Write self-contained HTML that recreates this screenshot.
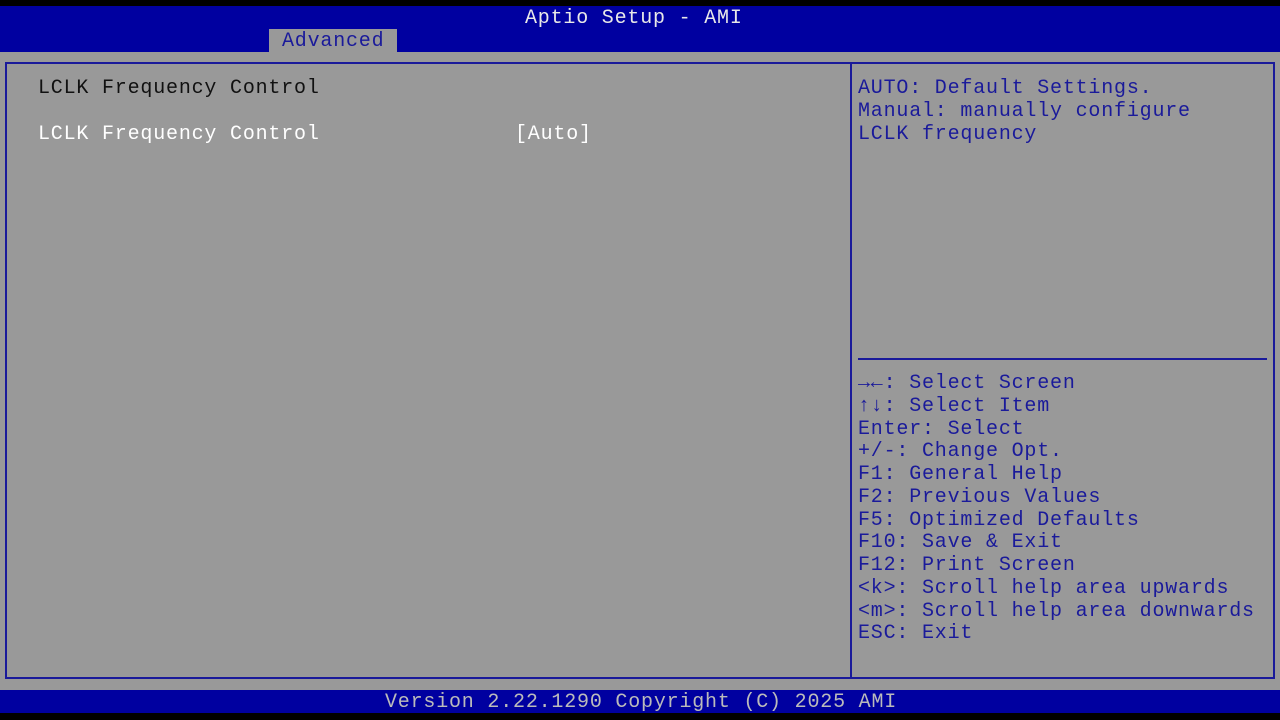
<!DOCTYPE html>
<html><head><style>
html,body{margin:0;padding:0;}
body{width:1280px;height:720px;background:#000;position:relative;overflow:hidden;font-family:"Liberation Mono","DejaVu Sans Mono",monospace;font-size:20px;letter-spacing:0.8px;}
.a{position:absolute;white-space:pre;line-height:23px;}
#hdr{position:absolute;left:0;top:6px;width:1280px;height:46px;background:#0000a0;}
#body{position:absolute;left:0;top:52px;width:1280px;height:638px;background:#999;}
#foot{position:absolute;left:0;top:690px;width:1280px;height:23px;background:#0000a0;}
#tab{position:absolute;left:269px;top:29px;width:128px;height:23px;background:#999;}
.bx{position:absolute;border:2px solid #1a1a9a;}
</style></head><body>
<div id="hdr"></div>
<div id="tab"></div>
<div class="a" style="left:525px;top:7px;color:#e8e8e8">Aptio Setup - AMI</div>
<div class="a" style="left:282px;top:30px;color:#1a1a9a">Advanced</div>
<div id="body"></div>
<div class="bx" style="left:5px;top:62px;width:844px;height:613px;border-right:none"></div>
<div class="bx" style="left:850px;top:62px;width:421px;height:613px"></div>
<div style="position:absolute;left:858px;top:358px;width:409px;height:2px;background:#1a1a9a"></div>
<div class="a" style="left:38px;top:77px;color:#111">LCLK Frequency Control</div>
<div class="a" style="left:38px;top:123px;color:#fff">LCLK Frequency Control</div>
<div class="a" style="left:515px;top:123px;color:#fff">[Auto]</div>
<div class="a" style="left:858px;top:77px;color:#1a1a9a">AUTO: Default Settings.
Manual: manually configure
LCLK frequency</div>
<div class="a" style="left:858px;top:373px;color:#1a1a9a;line-height:22.75px"><b>→←</b>: Select Screen
<b>↑↓</b>: Select Item
Enter: Select
+/-: Change Opt.
F1: General Help
F2: Previous Values
F5: Optimized Defaults
F10: Save &amp; Exit
F12: Print Screen
&lt;k&gt;: Scroll help area upwards
&lt;m&gt;: Scroll help area downwards
ESC: Exit</div>
<div id="foot"></div>
<div class="a" style="left:385px;top:691px;color:#bbb">Version 2.22.1290 Copyright (C) 2025 AMI</div>
</body></html>
